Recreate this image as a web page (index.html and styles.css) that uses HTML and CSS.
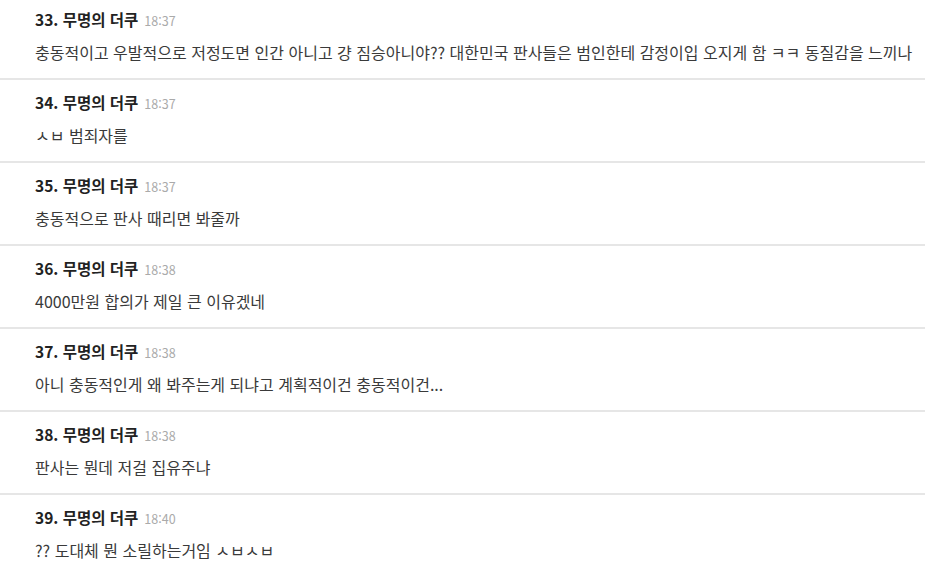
FILE: index.html
```html
<!DOCTYPE html>
<html lang="ko">
<head>
    <meta charset="UTF-8">
    <meta name="viewport" content="width=device-width, initial-scale=1.0">
    <title>댓글</title>
    <link rel="stylesheet" href="styles.css">
</head>
<body>
    <ul class="comment-list">
        <li class="comment">
            <div class="comment-head"><span class="comment-name">33. 무명의 더쿠</span><span class="comment-time">18:37</span></div>
            <p class="comment-text">충동적이고 우발적으로 저정도면 인간 아니고 걍 짐승아니야?? 대한민국 판사들은 범인한테 감정이입 오지게 함 ㅋㅋ 동질감을 느끼나</p>
        </li>
        <li class="comment">
            <div class="comment-head"><span class="comment-name">34. 무명의 더쿠</span><span class="comment-time">18:37</span></div>
            <p class="comment-text">ㅅㅂ 범죄자를</p>
        </li>
        <li class="comment">
            <div class="comment-head"><span class="comment-name">35. 무명의 더쿠</span><span class="comment-time">18:37</span></div>
            <p class="comment-text">충동적으로 판사 때리면 봐줄까</p>
        </li>
        <li class="comment">
            <div class="comment-head"><span class="comment-name">36. 무명의 더쿠</span><span class="comment-time">18:38</span></div>
            <p class="comment-text">4000만원 합의가 제일 큰 이유겠네</p>
        </li>
        <li class="comment">
            <div class="comment-head"><span class="comment-name">37. 무명의 더쿠</span><span class="comment-time">18:38</span></div>
            <p class="comment-text">아니 충동적인게 왜 봐주는게 되냐고 계획적이건 충동적이건...</p>
        </li>
        <li class="comment">
            <div class="comment-head"><span class="comment-name">38. 무명의 더쿠</span><span class="comment-time">18:38</span></div>
            <p class="comment-text">판사는 뭔데 저걸 집유주냐</p>
        </li>
        <li class="comment">
            <div class="comment-head"><span class="comment-name">39. 무명의 더쿠</span><span class="comment-time">18:40</span></div>
            <p class="comment-text">?? 도대체 뭔 소릴하는거임 ㅅㅂㅅㅂ</p>
        </li>
    </ul>
</body>
</html>
```

FILE: styles.css
```css
body {
    font-family: "Noto Sans CJK KR", "Noto Sans", sans-serif;
    margin: 0;
    background-color: #fff;
    color: #333;
}
.comment-list {
    list-style: none;
    margin: -3px 0 0 0;
    padding: 0;
}
.comment {
    padding: 12px 0 14px 35px;
    border-bottom: 2px solid #e6e6e6;
}
.comment-head {
    display: flex;
    align-items: baseline;
    height: 21px;
    line-height: 21px;
}
.comment-name {
    font-size: 15.5px;
    font-weight: bold;
    color: #222;
}
.comment-time {
    font-size: 12.5px;
    color: #aaa;
    margin-left: 6px;
}
.comment-text {
    margin: 10px 0 0 0;
    font-size: 16px;
    line-height: 24px;
    height: 24px;
    color: #3a3a3a;
    white-space: nowrap;
}
```
